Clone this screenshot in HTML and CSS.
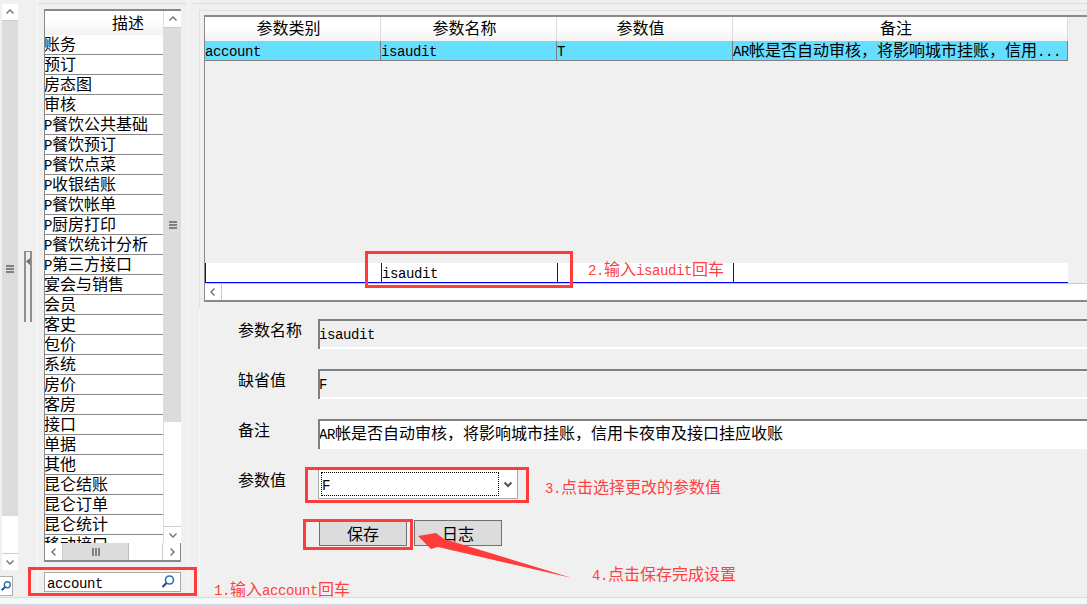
FILE: index.html
```html
<!DOCTYPE html>
<html lang="zh">
<head>
<meta charset="utf-8">
<title>参数设置</title>
<link rel="stylesheet" href="styles.css">
</head>
<body>
<div class="app">
  <div class="main">
    <div class="rail">
      <div class="vbar rail-bar">
        <div class="sbtn"><svg width="16" height="16" viewBox="0 0 16 16"><path d="M4.500 9.500 8 6l3.500 3.500" class="chev"/></svg></div>
        <div class="thumb rail-thumb"><svg width="8" height="8" viewBox="0 0 8 8"><path d="M0 1h8M0 4h8M0 7h8" class="grip"/></svg></div>
        <div class="track"></div>
        <div class="sbtn"><svg width="16" height="16" viewBox="0 0 16 16"><path d="M4.500 6.500 8 10l3.500-3.500" class="chev"/></svg></div>
      </div>
      <div class="rail-search"><svg width="14" height="14" viewBox="0 0 14 14"><circle cx="8.500" cy="5.500" r="3.500" class="lens"/><path d="M6 8 2 12" class="handle"/></svg></div>
    </div>

    <div class="splitter-zone">
      <div class="splitter"><svg width="4" height="7" viewBox="0 0 4 7"><path d="M4 0v7L0 3.500z" class="tri"/></svg></div>
    </div>

    <div class="list-panel">
      <div class="list">
        <div class="list-upper">
          <div class="list-col">
            <div class="list-head">描述</div>
            <div class="list-row">账务</div>
            <div class="list-row">预订</div>
            <div class="list-row">房态图</div>
            <div class="list-row">审核</div>
            <div class="list-row"><span class="l">P</span>餐饮公共基础</div>
            <div class="list-row"><span class="l">P</span>餐饮预订</div>
            <div class="list-row"><span class="l">P</span>餐饮点菜</div>
            <div class="list-row"><span class="l">P</span>收银结账</div>
            <div class="list-row"><span class="l">P</span>餐饮帐单</div>
            <div class="list-row"><span class="l">P</span>厨房打印</div>
            <div class="list-row"><span class="l">P</span>餐饮统计分析</div>
            <div class="list-row"><span class="l">P</span>第三方接口</div>
            <div class="list-row">宴会与销售</div>
            <div class="list-row">会员</div>
            <div class="list-row">客史</div>
            <div class="list-row">包价</div>
            <div class="list-row">系统</div>
            <div class="list-row">房价</div>
            <div class="list-row">客房</div>
            <div class="list-row">接口</div>
            <div class="list-row">单据</div>
            <div class="list-row">其他</div>
            <div class="list-row">昆仑结账</div>
            <div class="list-row">昆仑订单</div>
            <div class="list-row">昆仑统计</div>
            <div class="list-row">移动接口</div>
          </div>
          <div class="vbar list-vbar">
            <div class="sbtn"><svg width="16" height="16" viewBox="0 0 16 16"><path d="M4.500 9.500 8 6l3.500 3.500" class="chev"/></svg></div>
            <div class="thumb list-thumb"><svg width="8" height="8" viewBox="0 0 8 8"><path d="M0 1h8M0 4h8M0 7h8" class="grip"/></svg></div>
            <div class="track"></div>
            <div class="sbtn"><svg width="16" height="16" viewBox="0 0 16 16"><path d="M4.500 6.500 8 10l3.500-3.500" class="chev"/></svg></div>
          </div>
        </div>
        <div class="hbar">
          <div class="hbtn"><svg width="16" height="16" viewBox="0 0 16 16"><path d="M9.500 4.500 6 8l3.500 3.500" class="chev"/></svg></div>
          <div class="hthumb"><svg width="8" height="8" viewBox="0 0 8 8"><path d="M1 0v8M4 0v8M7 0v8" class="grip"/></svg></div>
          <div class="htrack"></div>
          <div class="hbtn"><svg width="16" height="16" viewBox="0 0 16 16"><path d="M6.500 4.500 10 8l-3.500 3.500" class="chev"/></svg></div>
        </div>
      </div>
      <div class="search">
        <span class="l">account</span>
        <svg width="16" height="16" viewBox="0 0 16 16"><circle cx="9.500" cy="6" r="4" class="lens"/><path d="M6.500 9 2.500 13" class="handle"/></svg>
      </div>
    </div>

    <div class="right">
      <div class="grid-zone">
        <div class="grid">
          <div class="grid-head">
            <div class="gh">参数类别</div>
            <div class="gh">参数名称</div>
            <div class="gh">参数值</div>
            <div class="gh">备注</div>
          </div>
          <div class="grid-row">
            <div class="gc"><span class="l">account</span></div>
            <div class="gc"><span class="l">isaudit</span></div>
            <div class="gc"><span class="l">T</span></div>
            <div class="gc"><span class="l">AR</span>帐是否自动审核，将影响城市挂账，信用<span class="l">...</span></div>
          </div>
          <div class="grid-space"></div>
          <div class="filter-row">
            <div class="fc"></div>
            <div class="fc"><span class="l">isaudit</span></div>
            <div class="fc"></div>
            <div class="fc"></div>
          </div>
          <div class="grid-hbar">
            <div class="hbtn"><svg width="16" height="16" viewBox="0 0 16 16"><path d="M9.500 4.500 6 8l3.500 3.500" class="chev"/></svg></div>
          </div>
        </div>
      </div>
      <div class="detail">
        <div class="form">
          <div class="flabel">参数名称</div>
          <div class="field"><span class="l">isaudit</span></div>
          <div class="flabel">缺省值</div>
          <div class="field"><span class="l">F</span></div>
          <div class="flabel">备注</div>
          <div class="field field-white"><span class="l">AR</span>帐是否自动审核，将影响城市挂账，信用卡夜审及接口挂应收账</div>
          <div class="flabel">参数值</div>
          <div class="select">
            <div class="select-focus"><span class="l">F</span></div>
            <svg width="18" height="16" viewBox="0 0 18 16"><path d="M5.500 6.500 9 10l3.500-3.500" class="chev-dark"/></svg>
          </div>
          <div class="form-spacer"></div>
          <div class="buttons">
            <div class="btn">保存</div>
            <div class="btn">日志</div>
          </div>
        </div>
      </div>
    </div>
  </div>
  <div class="footer"></div>

  <div class="mark mark-search"></div>
  <div class="mark mark-filter"></div>
  <div class="mark mark-select"></div>
  <div class="mark mark-save"></div>
  <svg class="arrow" width="160" height="50" viewBox="0 0 160 50"><polygon points="2,8 20,5 28,11 156,50 22,19 15,21" class="arrow-fill"/></svg>
  <div class="note note-1"><span class="l">1.</span>输入<span class="l">account</span>回车</div>
  <div class="note note-2"><span class="l">2.</span>输入<span class="l">isaudit</span>回车</div>
  <div class="note note-3"><span class="l">3.</span>点击选择更改的参数值</div>
  <div class="note note-4"><span class="l">4.</span>点击保存完成设置</div>
</div>
</body>
</html>
```
FILE: styles.css
```css
* { box-sizing: border-box; }
html, body { margin: 0; padding: 0; height: 100%; overflow: hidden; }
body {
  background: #f0f0f0;
  color: #000;
  font-family: "Noto Sans CJK SC", "Liberation Mono", sans-serif;
  font-size: 16px;
  line-height: 16px;
}
.l { font-family: "Liberation Mono", "DejaVu Sans Mono", monospace; font-size: 14px; letter-spacing: -0.4px; }

.app { position: relative; width: 1087px; height: 606px; overflow: hidden; display: flex; flex-direction: column; }
.main { display: flex; height: 597px; flex: none; }
.footer { flex: 1; border-top: 1px solid #d3dbe3; background: linear-gradient(#f7f7f7 0 6px, #c8dbe8 6px); }

/* scrollbars */
.vbar { display: flex; flex-direction: column; width: 18px; flex: none; background: #fff; }
.sbtn { height: 17px; flex: none; background: #fff; border-bottom: 1px solid #ccc; display: flex; align-items: center; justify-content: center; }
.sbtn:last-child { border-bottom: 0; border-top: 1px solid #ccc; }
.thumb { background: #dcdcdc; display: flex; align-items: center; justify-content: center; flex: none; }
.track { flex: 1; background: #fff; }
.chev { fill: none; stroke: #707070; stroke-width: 1.4; }
.chev-dark { fill: none; stroke: #555; stroke-width: 2; }
.grip { fill: none; stroke: #808080; stroke-width: 2; }

/* rail */
.rail { width: 20px; flex: none; padding: 4px 0 0 0; display: flex; flex-direction: column; align-items: flex-start; }
.rail-bar { height: 566px; width: 16px; margin-left: 2px; }
.rail-thumb { height: 495px; }
.rail-search { width: 13px; height: 20px; margin-top: 6px; background: #fff; border: 1px solid #b0b0b0; border-left: 0; display: flex; align-items: center; justify-content: center; }
.lens { fill: none; stroke: #2c6fb3; stroke-width: 1.600; }
.handle { fill: none; stroke: #1e4f8a; stroke-width: 2.200; }

.splitter-zone { width: 17px; flex: none; padding: 251px 0 0 4px; }
.splitter { width: 8px; height: 71px; border: 2px solid #8f8f8f; border-top-width: 1px; border-bottom: 0; display: flex; justify-content: center; padding-top: 6px; }
.tri { fill: #707070; }

/* list */
.list-panel {
  width: 156px; flex: none; padding: 9px 12px 0 6px;
  border-left: 1px solid #fafafa;
  background:
    linear-gradient(#f8f8fa, #f8f8fa) 149px 0 / 1px 100% no-repeat,
    linear-gradient(#d9dce2, #d9dce2) 0 3px / 150px 1px no-repeat;
}
.list { height: 553px; border: 1px solid #888; border-width: 2px 1px; background: #fff; display: flex; flex-direction: column; }
.list-upper { display: flex; height: 532px; flex: none; }
.list-col { width: 118px; flex: none; overflow: hidden; }
.list-head { height: 24px; line-height: 23px; text-align: right; padding-right: 19px; background: linear-gradient(#fff 0 40%, #f2f2f2 100%); }
.list-row { height: 20px; line-height: 16px; border-bottom: 1px solid #888; white-space: nowrap; background: #fff; text-indent: -1px; }
.list-vbar { border-left: 1px solid #ddd; }
.list-thumb { height: 394px; }
.hbar { display: flex; height: 17px; flex: none; }
.hbtn { width: 18px; flex: none; background: #fff; border-right: 1px solid #ccc; display: flex; align-items: center; justify-content: center; }
.hbar .hbtn:last-child { border-right: 0; border-left: 1px solid #ccc; }
.hthumb { width: 66px; flex: none; background: #dcdcdc; border-right: 1px solid #bbb; display: flex; align-items: center; justify-content: center; }
.htrack { flex: 1; background: #fff; }
.search { height: 20px; margin-top: 10px; border: 1px solid #aaa; background: #fff; display: flex; align-items: center; justify-content: space-between; padding: 0 4px 0 2px; }
.search .l { margin-top: 3px; }

/* right */
.right { flex: 1; min-width: 0; display: flex; flex-direction: column; }
.grid-zone {
  padding: 15px 0 0 11px; height: 309px; flex: none;
  background:
    linear-gradient(#dde1e8, #dde1e8) 6px 10px / 100% 1px no-repeat,
    linear-gradient(#dde1e8, #dde1e8) 6px 10px / 1px 100% no-repeat,
    linear-gradient(#dde1e8, #dde1e8) 6px 298px / 100% 1px no-repeat,
    linear-gradient(#d9dce2, #d9dce2) 0 3px / 100% 1px no-repeat;
}
.grid { height: 287px; border: 2px solid #8a8a8a; border-width: 2px 0 2px 1px; display: flex; flex-direction: column; }
.grid-head, .grid-row, .filter-row { display: grid; grid-template-columns: 176px 176px 176px 335px; flex: none; }
.grid-head { height: 24px; }
.gh { line-height: 21px; text-align: center; padding-right: 8px; border-right: 1px solid #ddd; background: linear-gradient(#fff 0 40%, #f2f2f2 100%); }
.grid-row { height: 20px; background: #66dfff; width: 863px; border-bottom: 1px solid #808080; }
.gc { line-height: 16px; border-right: 1px solid #808080; white-space: nowrap; }
.grid-space { flex: 1; }
.filter-row { height: 20px; width: 863px; background: #fff; border-bottom: 1px solid #0000ff; }
.fc { border-left: 1px solid #0000ff; line-height: 16px; }
.grid-hbar { height: 17px; flex: none; background: #fff; display: flex; border-top: 1px solid #ccc; }
.grid-hbar .hbtn { width: 17px; }

.detail { flex: 1; padding: 10px 0 0 6px; background: linear-gradient(#fafafa, #fafafa) 6px 0 / 1px 100% no-repeat; }
.form { display: grid; grid-template-columns: 80px 773px; grid-auto-rows: 30px; row-gap: 20px; padding-left: 39px; }
.flabel { line-height: 16px; padding-top: 2px; }
.field { border: 2px solid #808080; border-width: 2px 0 0 2px; background: #f0f0f0; box-shadow: inset 0 -2px 0 #fff; line-height: 22px; white-space: nowrap; overflow: hidden; text-indent: -1px; }
.field-white { background: #fff; }
.select { width: 200px; height: 30px; border: 1px solid #aaa; background: #fff; display: flex; align-items: center; padding: 2px 0 2px 2px; }
.select-focus { flex: 1; height: 100%; border: 1px dotted #000; line-height: 20px; }
.form-spacer { height: 0; }
.buttons { display: flex; gap: 7px; margin: 1px 0 0 1px; height: 26px; }
.btn { width: 88px; height: 26px; background: #dcdcdc; border: 1px solid #707070; text-align: center; line-height: 24px; }

/* annotations laid over the screenshot */
.mark { position: absolute; border: 3px solid #ff3b3b; }
.mark-search { left: 28px; top: 567px; width: 169px; height: 29px; }
.mark-filter { left: 365px; top: 251px; width: 208px; height: 37px; }
.mark-select { left: 305px; top: 467px; width: 224px; height: 36px; }
.mark-save { left: 303px; top: 519px; width: 110px; height: 31px; }
.arrow { position: absolute; left: 416px; top: 528px; }
.arrow-fill { fill: #ff3b3b; }
.note { position: absolute; color: #ff4040; white-space: nowrap; line-height: 16px; }
.note-1 { left: 214px; top: 580px; }
.note-2 { left: 588px; top: 260px; }
.note-3 { left: 545px; top: 478px; }
.note-4 { left: 592px; top: 565px; }
```
